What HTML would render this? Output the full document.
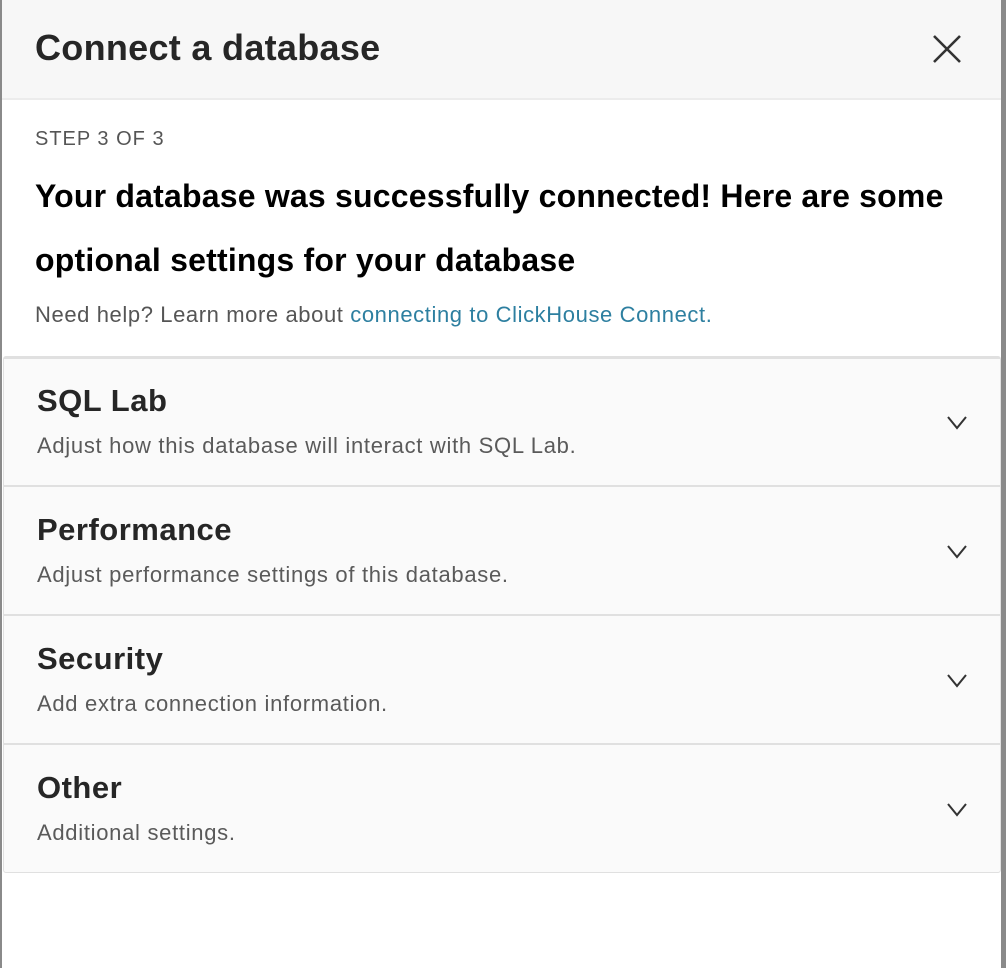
<!DOCTYPE html>
<html><head><meta charset="utf-8"><style>
*{margin:0;padding:0;box-sizing:border-box}
body{width:1006px;height:968px;overflow:hidden;background:#fff;font-family:"Liberation Sans",sans-serif;position:relative}
.lb{position:absolute;left:0;top:0;width:2px;height:968px;background:#8a8a8a}
.rb{position:absolute;right:0;top:0;width:5px;height:968px;background:#8a8a8a}
.hd{position:absolute;left:2px;top:0;width:999px;height:100px;background:#f7f7f7;border-bottom:2px solid #ececec}
.hd h1{position:absolute;left:33px;top:27px;font-size:36px;font-weight:bold;color:#262626;letter-spacing:0.3px}
.x{position:absolute;left:930px;top:34px}
.step{position:absolute;left:35px;top:128px;font-size:20px;color:#555;letter-spacing:1px}
.big{position:absolute;left:35px;top:164px;width:960px;font-size:32px;font-weight:bold;color:#000;line-height:64px;letter-spacing:0.2px}
.help{position:absolute;left:35px;top:302px;font-size:22px;color:#555;letter-spacing:0.6px}
.help a{color:#2d7fa0;text-decoration:none}
.pn{position:absolute;left:3px;top:356px;width:998px;height:517px;background:#fafafa;border:1px solid #e0e0e0;border-top:3px solid #e0e0e0;border-radius:3px}
.it{position:absolute;left:0;width:996px;height:128px;border-bottom:2px solid #e0e0e0}
.it:last-child{border-bottom:none}
.it h2{position:absolute;left:33px;top:24px;font-size:31px;font-weight:bold;color:#262626;letter-spacing:0.5px}
.it p{position:absolute;left:33px;top:74px;font-size:22px;color:#5a5a5a;letter-spacing:0.7px}
.it svg{position:absolute;left:942px;top:56px}
</style></head><body>
<div class="lb"></div><div class="rb"></div>
<div class="hd"><h1>Connect a database</h1>
<svg class="x" width="30" height="30" viewBox="0 0 30 30"><path d="M2 2L28 28M28 2L2 28" stroke="#333" stroke-width="2.6" fill="none"/></svg></div>
<div class="step">STEP 3 OF 3</div>
<div class="big">Your database was successfully connected! Here are some optional settings for your database</div>
<div class="help">Need help? Learn more about <a>connecting to ClickHouse Connect.</a></div>
<div class="pn">
<div class="it" style="top:0"><h2>SQL Lab</h2><p>Adjust how this database will interact with SQL Lab.</p><svg width="22" height="16" viewBox="0 0 22 16"><path d="M2 2L11 13L20 2" stroke="#333" stroke-width="2" fill="none"/></svg></div>
<div class="it" style="top:129px"><h2>Performance</h2><p>Adjust performance settings of this database.</p><svg width="22" height="16" viewBox="0 0 22 16"><path d="M2 2L11 13L20 2" stroke="#333" stroke-width="2" fill="none"/></svg></div>
<div class="it" style="top:258px"><h2>Security</h2><p>Add extra connection information.</p><svg width="22" height="16" viewBox="0 0 22 16"><path d="M2 2L11 13L20 2" stroke="#333" stroke-width="2" fill="none"/></svg></div>
<div class="it" style="top:387px"><h2>Other</h2><p>Additional settings.</p><svg width="22" height="16" viewBox="0 0 22 16"><path d="M2 2L11 13L20 2" stroke="#333" stroke-width="2" fill="none"/></svg></div>
</div>
</body></html>
